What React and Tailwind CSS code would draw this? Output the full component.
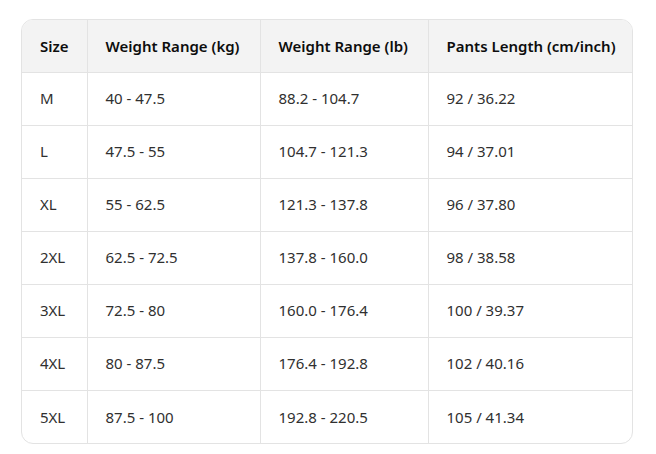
import React from 'react';

const rows = [
  ['M', '40 - 47.5', '88.2 - 104.7', '92 / 36.22'],
  ['L', '47.5 - 55', '104.7 - 121.3', '94 / 37.01'],
  ['XL', '55 - 62.5', '121.3 - 137.8', '96 / 37.80'],
  ['2XL', '62.5 - 72.5', '137.8 - 160.0', '98 / 38.58'],
  ['3XL', '72.5 - 80', '160.0 - 176.4', '100 / 39.37'],
  ['4XL', '80 - 87.5', '176.4 - 192.8', '102 / 40.16'],
  ['5XL', '87.5 - 100', '192.8 - 220.5', '105 / 41.34'],
];

const headers = ['Size', 'Weight Range (kg)', 'Weight Range (lb)', 'Pants Length (cm/inch)'];
const widths = ['w-[65px]', 'w-[173px]', 'w-[168px]', 'w-[206px]'];

export default function App() {
  return (
    <div className="bg-white w-[656px] h-[454px] pt-[19px] pl-[21px] font-['Noto_Sans',sans-serif] text-[15px]">
      <div className="w-[612px] border border-[#e3e3e3] rounded-xl overflow-hidden">
        <table className="w-full border-collapse table-fixed">
          <thead>
            <tr className="bg-[#f3f3f3]">
              {headers.map((h, i) => (
                <th
                  key={h}
                  className={`${widths[i]} h-[52px] px-[18px] text-left font-semibold text-[#0d0d0d] ${i > 0 ? 'border-l border-[#e3e3e3]' : ''}`}
                >
                  {h}
                </th>
              ))}
            </tr>
          </thead>
          <tbody>
            {rows.map((r) => (
              <tr key={r[0]} className="border-t border-[#e3e3e3]">
                {r.map((c, i) => (
                  <td
                    key={i}
                    className={`h-[53px] px-[18px] text-[#303030] ${i > 0 ? 'border-l border-[#e3e3e3]' : ''}`}
                  >
                    {c}
                  </td>
                ))}
              </tr>
            ))}
          </tbody>
        </table>
      </div>
    </div>
  );
}
